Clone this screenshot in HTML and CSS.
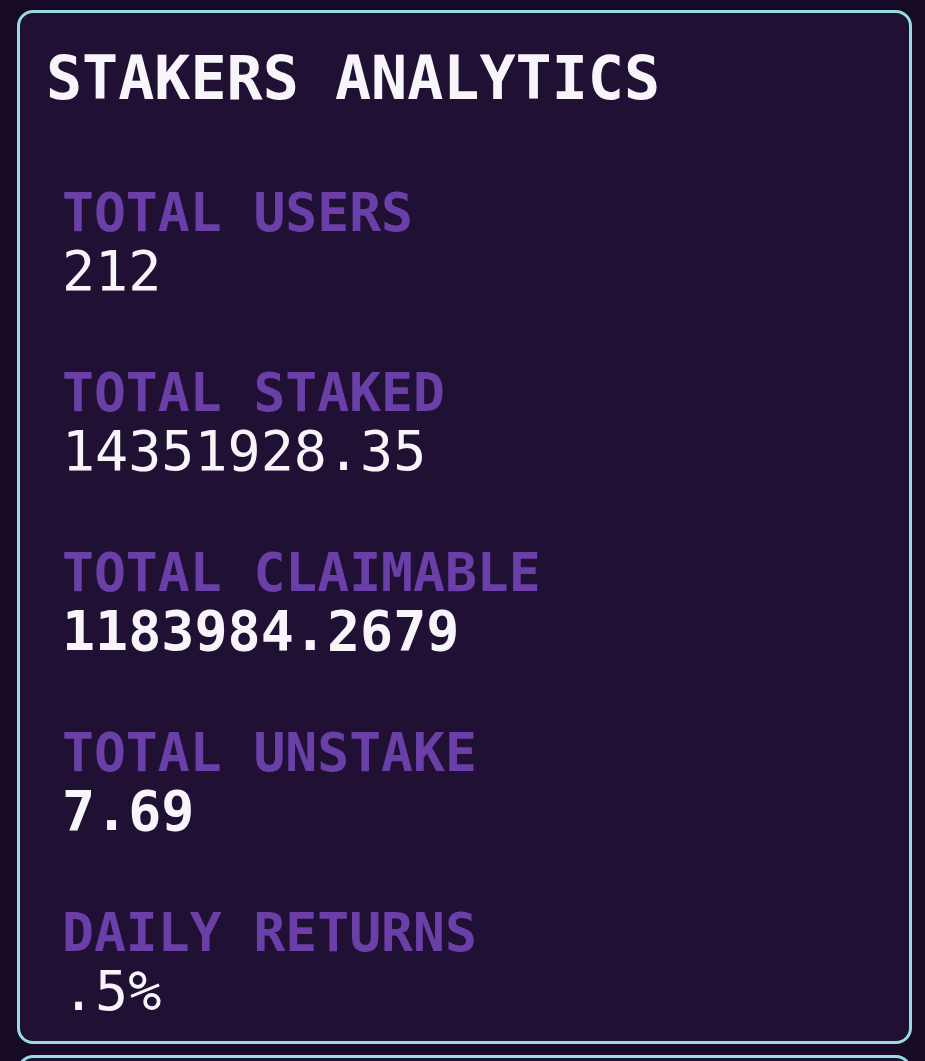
FILE: index.html
```html
<!DOCTYPE html>
<html lang="en">
<head>
  <meta charset="UTF-8">
  <meta name="viewport" content="width=device-width, initial-scale=1.0">
  <title>Stakers Analytics</title>
  <link rel="stylesheet" href="styles.css">
</head>
<body>
  <section class="card">
    <h1 class="card-title">STAKERS ANALYTICS</h1>

    <div class="stats">
      <div class="stat">
        <div class="stat-label">TOTAL USERS</div>
        <div class="stat-value">212</div>
      </div>
      <div class="stat">
        <div class="stat-label">TOTAL STAKED</div>
        <div class="stat-value">14351928.35</div>
      </div>
      <div class="stat">
        <div class="stat-label">TOTAL CLAIMABLE</div>
        <div class="stat-value strong">1183984.2679</div>
      </div>
      <div class="stat">
        <div class="stat-label">TOTAL UNSTAKE</div>
        <div class="stat-value strong">7.69</div>
      </div>
      <div class="stat">
        <div class="stat-label">DAILY RETURNS</div>
        <div class="stat-value">.5%</div>
      </div>
    </div>
  </section>

  <section class="card card-next"></section>
</body>
</html>
```

FILE: styles.css
```css
:root {
  --page-bg: #170a26;
  --card-bg: #1f1034;
  --card-border: #97dcdf;
  --label: #6a40a8;
  --text: #f7f4fa;
}

body {
  margin: 0;
  background-color: var(--page-bg);
  color: var(--text);
  font-family: "DejaVu Sans Mono", "Liberation Mono", monospace;
  overflow: hidden;
}

.card {
  margin: 10px 13px 0 17px;
  padding: 35px 24px 21px 26px;
  background-color: var(--card-bg);
  border: 3px solid var(--card-border);
  border-radius: 16px;
}

.card-title {
  margin: 0;
  font-size: 60px;
  line-height: 60px;
  font-weight: bold;
}

.stats {
  display: flex;
  flex-direction: column;
  gap: 64px;
  margin-top: 76px;
  padding-left: 16px;
}

.stat-label {
  color: var(--label);
  font-size: 53px;
  line-height: 58px;
  font-weight: bold;
}

.stat-value {
  font-size: 55px;
  line-height: 58px;
}

.stat-value.strong {
  font-weight: bold;
}

.card-next {
  margin-top: 11px;
  height: 200px;
  padding: 0;
}
```
